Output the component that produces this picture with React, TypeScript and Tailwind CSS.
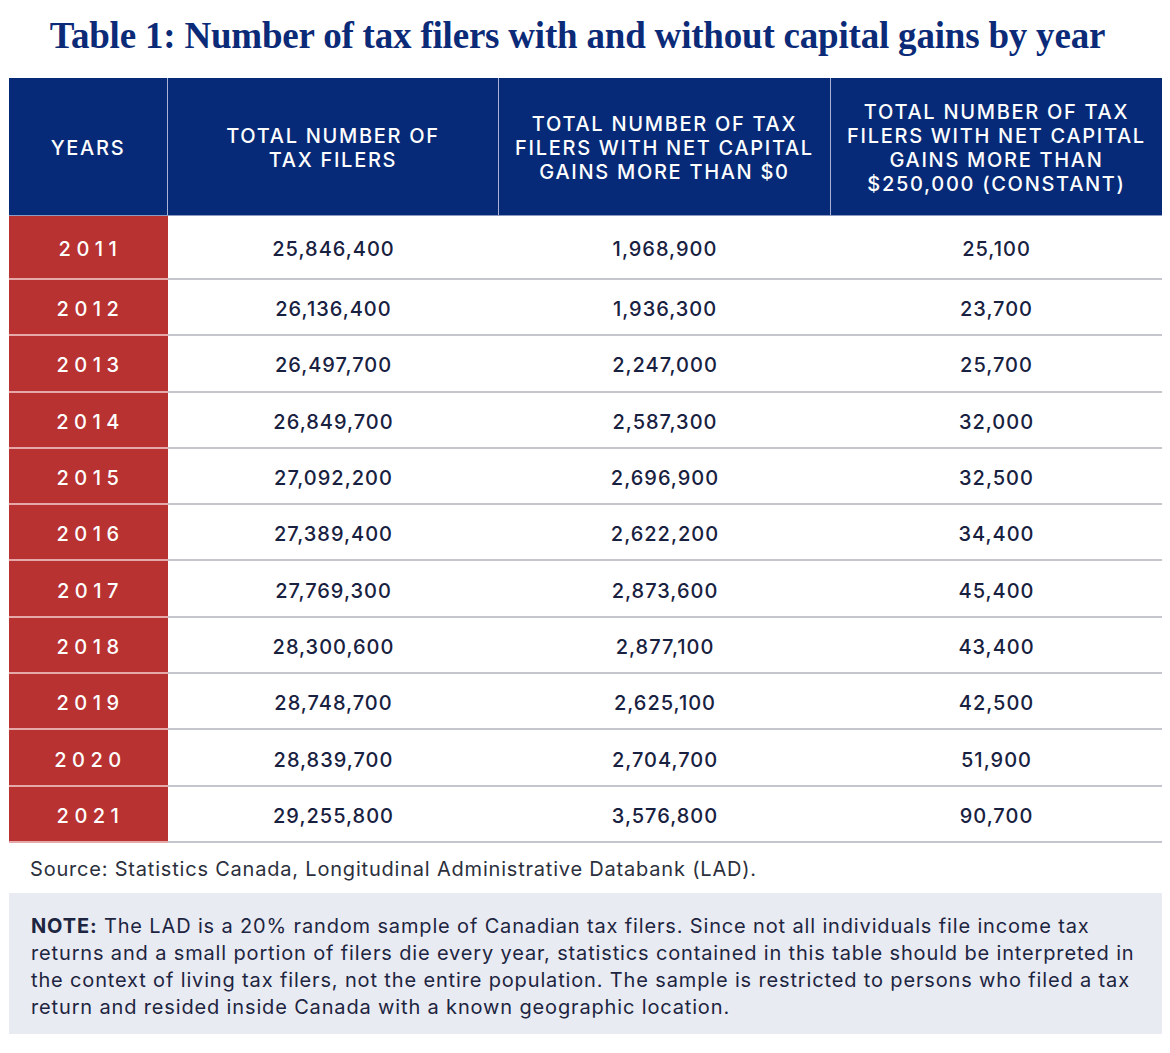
import React from "react";

const rows: [string, string, string, string][] = [
  ["2011", "25,846,400", "1,968,900", "25,100"],
  ["2012", "26,136,400", "1,936,300", "23,700"],
  ["2013", "26,497,700", "2,247,000", "25,700"],
  ["2014", "26,849,700", "2,587,300", "32,000"],
  ["2015", "27,092,200", "2,696,900", "32,500"],
  ["2016", "27,389,400", "2,622,200", "34,400"],
  ["2017", "27,769,300", "2,873,600", "45,400"],
  ["2018", "28,300,600", "2,877,100", "43,400"],
  ["2019", "28,748,700", "2,625,100", "42,500"],
  ["2020", "28,839,700", "2,704,700", "51,900"],
  ["2021", "29,255,800", "3,576,800", "90,700"],
];

const sans = "font-['Inter','Liberation_Sans',sans-serif]";

export default function App() {
  return (
    <div className={`w-[1170px] h-[1053px] bg-white ${sans}`}>
      <h1 className="pt-[14px] pr-[15px] h-[78px] text-center font-['Liberation_Serif',serif] font-bold text-[37px] leading-[44px] tracking-[-0.2px] text-[#0b2a78] whitespace-nowrap">
        Table 1: Number of tax filers with and without capital gains by year
      </h1>
      <div className="mx-[9px] w-[1153px]">
        <div className="grid grid-cols-[159px_331px_332px_331px] h-[138px] bg-[#062a78] border-b border-[#8d9bc3] text-white text-[20px] leading-[24px] tracking-[1.7px] font-medium uppercase text-center">
          <div className="flex items-center justify-center border-r border-[#a9b4d4] px-2 pt-[3px]">Years</div>
          <div className="flex items-center justify-center border-r border-[#a9b4d4] px-[50px] pt-[3px]">Total number of tax filers</div>
          <div className="flex items-center justify-center border-r border-[#a9b4d4] px-[4px] pt-[3px]">Total number of tax filers with net capital gains more than $0</div>
          <div className="flex items-center justify-center px-[4px] pt-[3px]">Total number of tax filers with net capital gains more than $250,000 (constant)</div>
        </div>
        {rows.map((r, i) => (
          <div
            key={r[0]}
            className={`grid grid-cols-[159px_331px_332px_331px] ${i === 0 ? "h-[64px]" : "h-[56.3px]"} text-[20px] tracking-[1px] font-medium text-center`}
          >
            <div className="flex items-center justify-center pt-[4px] bg-[#b83232] border-b-2 border-[#e6a9a9] text-white tracking-[5.5px] pl-[4px]">
              {r[0]}
            </div>
            <div className="flex items-center justify-center pt-[4px] border-b-2 border-[#c4c5cd] text-[#18213f]">{r[1]}</div>
            <div className="flex items-center justify-center pt-[4px] border-b-2 border-[#c4c5cd] text-[#18213f]">{r[2]}</div>
            <div className="flex items-center justify-center pt-[4px] border-b-2 border-[#c4c5cd] text-[#18213f]">{r[3]}</div>
          </div>
        ))}
        <p className="pl-[21px] pt-[13px] h-[50px] text-[20px] leading-[26px] tracking-[0.8px] text-[#2b303c] whitespace-nowrap">
          Source: Statistics Canada, Longitudinal Administrative Databank (LAD).
        </p>
        <div className="bg-[#e9ebf3] h-[141px] pl-[22px] pt-[20px] text-[20px] leading-[27px] tracking-[0.85px] text-[#1d2540] whitespace-nowrap">
          <div>
            <span className="font-bold">NOTE:</span> The LAD is a 20% random sample of Canadian tax filers. Since not all individuals file income tax
          </div>
          <div>returns and a small portion of filers die every year, statistics contained in this table should be interpreted in</div>
          <div>the context of living tax filers, not the entire population. The sample is restricted to persons who filed a tax</div>
          <div>return and resided inside Canada with a known geographic location.</div>
        </div>
      </div>
    </div>
  );
}
